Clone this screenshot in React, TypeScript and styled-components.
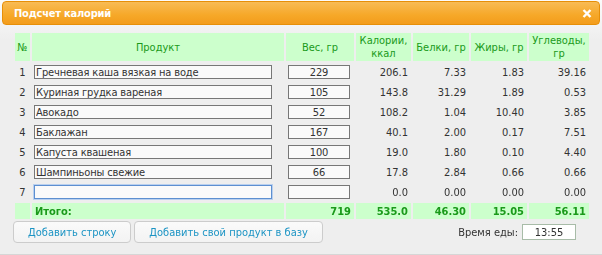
import React from "react";
import styled, { createGlobalStyle, css } from "styled-components";

const GlobalStyle = createGlobalStyle`
  html, body { margin: 0; padding: 0; background: #ffffff; }
  body {
    font-family: "DejaVu Sans Condensed", "DejaVu Sans", sans-serif;
    font-stretch: condensed;
    font-size: 11px;
    color: #333333;
  }
`;

const font = css`
  font-family: "DejaVu Sans Condensed", "DejaVu Sans", sans-serif;
  font-stretch: condensed;
`;

const Dialog = styled.div`
  width: 602px;
  height: 255px;
  box-sizing: border-box;
  padding: 1px 2px 0;
  background: linear-gradient(#fbfbfb 0px, #eeeeee 40px);
  border-bottom: 1px solid #d6d6d6;
  display: flex;
  flex-direction: column;
`;

const TitleBar = styled.div`
  height: 24px;
  box-sizing: border-box;
  border: 1px solid #e78f08;
  border-radius: 4px;
  background: linear-gradient(#f8bb55, #f6a828 60%, #f39c1c);
  display: flex;
  align-items: center;
  justify-content: space-between;
  padding: 0 7px 0 11px;
`;

const Title = styled.span`
  ${font};
  color: #ffffff;
  font-weight: bold;
  font-size: 11px;
  letter-spacing: -0.2px;
`;

const Close = styled.svg`
  width: 10px;
  height: 9px;
  display: block;
`;

const Content = styled.div`
  padding: 6px 0 0 11px;
  display: flex;
  flex-direction: column;
`;

const Table = styled.table`
  border-spacing: 2px;
  border-collapse: separate;
  table-layout: fixed;
  width: 578px;
`;

const Th = styled.th`
  ${font};
  background: #ccffcc;
  color: #1a9a1a;
  font-weight: normal;
  font-size: 11px;
  line-height: 13px;
  height: 28px;
  padding: 0;
  text-align: center;
  vertical-align: middle;
`;

const Tr = styled.tr`
  height: 18px;
`;

const NumCell = styled.td`
  padding: 0;
  text-align: center;
  color: #333;
  font-size: 11px;
`;

const InputCell = styled.td`
  padding: 0 0 0 2px;
  vertical-align: middle;
`;

const ValueCell = styled.td`
  padding: 0 3px 0 0;
  text-align: right;
  color: #333;
  font-size: 11px;
  vertical-align: middle;
`;

const TextInput = styled.input<{ $w: number; $center?: boolean; $focus?: boolean }>`
  ${font};
  display: block;
  box-sizing: border-box;
  width: ${(p) => p.$w}px;
  height: 14px;
  margin: 0;
  padding: 0 1px;
  font-size: 11px;
  letter-spacing: -0.15px;
  color: #333;
  background: #fafafa;
  border: 1px solid #777777;
  text-align: ${(p) => (p.$center ? "center" : "left")};
  outline: none;
  ${(p) =>
    p.$focus &&
    css`
      border-color: #5d8fd0;
      box-shadow: 0 0 0 1px #b9d0ef;
    `}
`;

const TotalRow = styled.tr`
  height: 16px;
`;

const TotalCell = styled.td<{ $left?: boolean }>`
  background: #ccffcc;
  color: #1a9a1a;
  font-weight: bold;
  font-size: 11px;
  padding: ${(p) => (p.$left ? "0 0 0 3px" : "0 3px 0 0")};
  text-align: ${(p) => (p.$left ? "left" : "right")};
  vertical-align: middle;
`;

const Footer = styled.div`
  display: flex;
  align-items: center;
  gap: 3px;
  padding-right: 24px;
`;

const Button = styled.button`
  ${font};
  height: 22px;
  box-sizing: border-box;
  border: 1px solid #cccccc;
  border-radius: 4px;
  background: linear-gradient(#fafafa, #f3f3f3);
  color: #1c94c4;
  font-size: 11px;
  padding: 0 14px;
  margin: 0;
  cursor: pointer;
`;

const MealTime = styled.label`
  margin-left: auto;
  display: flex;
  align-items: center;
  gap: 4px;
  color: #333;
  font-size: 11px;
`;

const TimeInput = styled.input`
  ${font};
  box-sizing: border-box;
  width: 54px;
  height: 16px;
  border: 1px solid #a8bca8;
  background: #ffffff;
  text-align: center;
  font-size: 11px;
  color: #333;
  padding: 0;
  margin: 0;
  outline: none;
`;

type Row = { name: string; w: string; kcal: string; p: string; f: string; c: string };

const rows: Row[] = [
  { name: "Гречневая каша вязкая на воде", w: "229", kcal: "206.1", p: "7.33", f: "1.83", c: "39.16" },
  { name: "Куриная грудка вареная", w: "105", kcal: "143.8", p: "31.29", f: "1.89", c: "0.53" },
  { name: "Авокадо", w: "52", kcal: "108.2", p: "1.04", f: "10.40", c: "3.85" },
  { name: "Баклажан", w: "167", kcal: "40.1", p: "2.00", f: "0.17", c: "7.51" },
  { name: "Капуста квашеная", w: "100", kcal: "19.0", p: "1.80", f: "0.10", c: "4.40" },
  { name: "Шампиньоны свежие", w: "66", kcal: "17.8", p: "2.84", f: "0.66", c: "0.66" },
  { name: "", w: "", kcal: "0.0", p: "0.00", f: "0.00", c: "0.00" },
];

export default function App() {
  return (
    <>
      <GlobalStyle />
      <Dialog>
        <TitleBar>
          <Title>Подсчет калорий</Title>
          <Close viewBox="0 0 10 9">
            <path d="M1.5 1 L8.5 8 M8.5 1 L1.5 8" stroke="#fff" strokeWidth="2.4" strokeLinecap="butt" />
          </Close>
        </TitleBar>
        <Content>
          <Table>
            <colgroup>
              <col style={{ width: 15 }} />
              <col style={{ width: 252 }} />
              <col style={{ width: 68 }} />
              <col style={{ width: 55 }} />
              <col style={{ width: 56 }} />
              <col style={{ width: 56 }} />
              <col style={{ width: 60 }} />
            </colgroup>
            <thead>
              <tr>
                <Th>№</Th>
                <Th>Продукт</Th>
                <Th>Вес, гр</Th>
                <Th>Калории,<br />ккал</Th>
                <Th>Белки, гр</Th>
                <Th>Жиры, гр</Th>
                <Th>Углеводы,<br />гр</Th>
              </tr>
            </thead>
            <tbody>
              {rows.map((r, i) => (
                <Tr key={i}>
                  <NumCell>{i + 1}</NumCell>
                  <InputCell>
                    <TextInput $w={238} defaultValue={r.name} $focus={i === 6} autoFocus={i === 6} />
                  </InputCell>
                  <InputCell>
                    <TextInput $w={62} $center defaultValue={r.w} />
                  </InputCell>
                  <ValueCell>{r.kcal}</ValueCell>
                  <ValueCell>{r.p}</ValueCell>
                  <ValueCell>{r.f}</ValueCell>
                  <ValueCell>{r.c}</ValueCell>
                </Tr>
              ))}
              <TotalRow>
                <TotalCell />
                <TotalCell $left>Итого:</TotalCell>
                <TotalCell>719</TotalCell>
                <TotalCell>535.0</TotalCell>
                <TotalCell>46.30</TotalCell>
                <TotalCell>15.05</TotalCell>
                <TotalCell>56.11</TotalCell>
              </TotalRow>
            </tbody>
          </Table>
          <Footer>
            <Button>Добавить строку</Button>
            <Button>Добавить свой продукт в базу</Button>
            <MealTime>
              Время еды:
              <TimeInput defaultValue="13:55" />
            </MealTime>
          </Footer>
        </Content>
      </Dialog>
    </>
  );
}
